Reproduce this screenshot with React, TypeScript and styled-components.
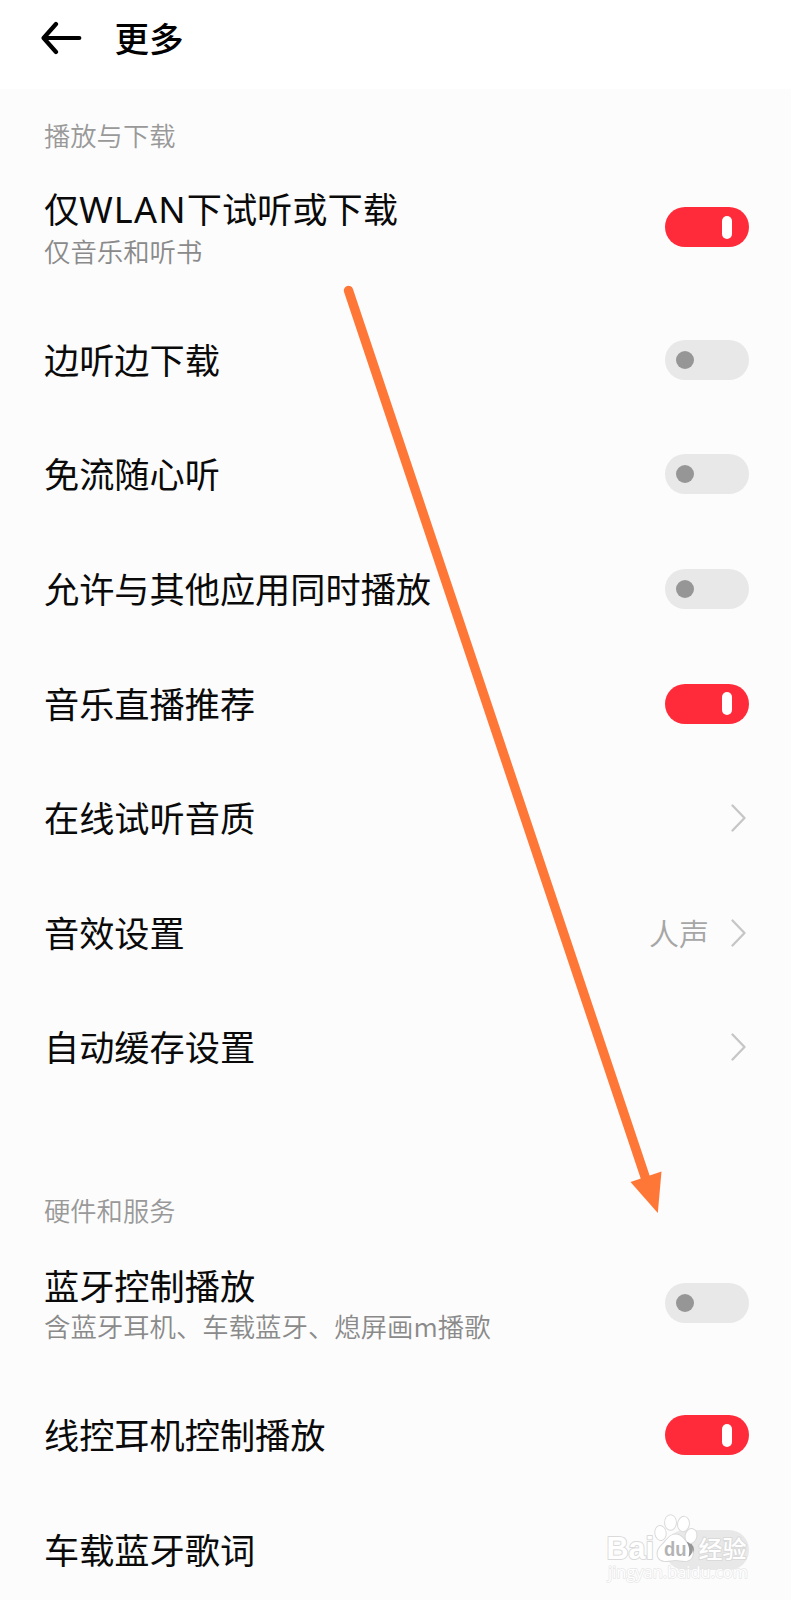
import React from "react";
import styled, { createGlobalStyle } from "styled-components";

const GlobalStyle = createGlobalStyle`
  * { box-sizing: border-box; }
  html, body { margin: 0; padding: 0; background: #fcfcfc; }
  body { overflow: hidden; }
`;

const Page = styled.main`
  position: relative;
  width: 791px;
  height: 1600px;
  overflow: hidden;
  display: flex;
  flex-direction: column;
  background: #fcfcfc;
  color: #0a0a0a;
  font-family: "Noto Sans CJK SC", "Noto Sans", sans-serif;
`;

const Header = styled.header`
  flex: none;
  display: flex;
  align-items: center;
  gap: 32.5px;
  height: 89px;
  padding: 0 0 13px 41px;
  background: #fff;
`;

const Title = styled.h1`
  margin: 0;
  padding-bottom: 2px;
  font-size: 34.6px;
  line-height: 50px;
  font-weight: 500;
  color: #000;
`;

const Section = styled.section`
  flex: none;
  padding: 31px 42px 0 44px;

  & + & {
    padding-top: 90.7px;
  }
`;

const SectionLabel = styled.h2`
  margin: 0;
  height: 32px;
  font-size: 26.3px;
  line-height: 29px;
  font-weight: 350;
  color: #999;
`;

const Row = styled.div<{ $tall?: boolean }>`
  display: flex;
  align-items: center;
  justify-content: space-between;
  height: ${(p) => (p.$tall ? 150.5 : 114.6)}px;
`;

const Labels = styled.div<{ $tall?: boolean }>`
  display: flex;
  flex-direction: column;
  padding: ${(p) => (p.$tall ? "1px 0 0" : "0 0 2px")};
  white-space: nowrap;
`;

const Name = styled.span`
  font-size: 35.2px;
  line-height: 44px;
`;

const Latin = styled.span`
  font-family: "Noto Sans", sans-serif;
  font-size: 36px;
  letter-spacing: 1.2px;
`;

const Note = styled.span`
  padding-top: 1px;
  font-size: 26.4px;
  line-height: 36px;
  font-weight: 350;
  color: #8a8a8a;
`;

const Track = styled.span<{ $on?: boolean }>`
  flex: none;
  display: flex;
  align-items: center;
  justify-content: ${(p) => (p.$on ? "flex-end" : "flex-start")};
  width: 84px;
  height: 40px;
  padding: 0 ${(p) => (p.$on ? 17.5 : 11)}px;
  border-radius: 20px;
  background: ${(p) => (p.$on ? "#ff2b3a" : "#e8e8e8")};
`;

const Knob = styled.span<{ $on?: boolean }>`
  width: ${(p) => (p.$on ? 9.5 : 18)}px;
  height: ${(p) => (p.$on ? 23 : 18)}px;
  border-radius: 9px;
  background: ${(p) => (p.$on ? "#fff" : "#969696")};
`;

const Trailing = styled.span`
  display: flex;
  align-items: center;
  gap: 22px;
  padding-right: 3px;
`;

const Value = styled.span`
  padding-bottom: 2px;
  font-size: 30px;
  line-height: 40px;
  font-weight: 350;
  color: #a6a6a6;
`;

const Overlay = styled.svg`
  position: absolute;
  inset: 0;
  pointer-events: none;
`;

const BackIcon = () => (
  <svg width="41" height="34" viewBox="0 0 41 34" fill="none" stroke="#000" strokeWidth="4.2" strokeLinecap="round" strokeLinejoin="round">
    <path d="M15 3 2.6 17 15 31M3 17H38.3" />
  </svg>
);

const Chevron = () => (
  <svg width="15" height="28" viewBox="0 0 15 28" fill="none" stroke="#c6c6c6" strokeWidth="2.3" strokeLinecap="round" strokeLinejoin="round">
    <path d="M1.5 1.5 13.5 14 1.5 26.5" />
  </svg>
);

const Switch = ({ on }: { on?: boolean }) => (
  <Track $on={on} role="switch" aria-checked={!!on}>
    <Knob $on={on} />
  </Track>
);

type Item = {
  name: React.ReactNode;
  note?: string;
  on?: boolean;
  link?: boolean;
  value?: string;
};

const playback: Item[] = [
  { name: <>仅<Latin>WLAN</Latin>下试听或下载</>, note: "仅音乐和听书", on: true },
  { name: "边听边下载" },
  { name: "免流随心听" },
  { name: "允许与其他应用同时播放" },
  { name: "音乐直播推荐", on: true },
  { name: "在线试听音质", link: true },
  { name: "音效设置", link: true, value: "人声" },
  { name: "自动缓存设置", link: true },
];

const hardware: Item[] = [
  { name: "蓝牙控制播放", note: "含蓝牙耳机、车载蓝牙、熄屏画m播歌" },
  { name: "线控耳机控制播放", on: true },
  { name: "车载蓝牙歌词" },
];

const Group = ({ label, items }: { label: string; items: Item[] }) => (
  <Section>
    <SectionLabel>{label}</SectionLabel>
    {items.map((item, i) => (
      <Row key={i} $tall={!!item.note}>
        <Labels $tall={!!item.note}>
          <Name>{item.name}</Name>
          {item.note && <Note>{item.note}</Note>}
        </Labels>
        {item.link ? (
          <Trailing>
            {item.value && <Value>{item.value}</Value>}
            <Chevron />
          </Trailing>
        ) : (
          <Switch on={item.on} />
        )}
      </Row>
    ))}
  </Section>
);

const Annotation = () => (
  <Overlay width="791" height="1600" viewBox="0 0 791 1600" aria-hidden="true">
    <path d="M348.5 290.5 645.5 1178" stroke="#ff7737" strokeWidth="9.4" strokeLinecap="round" />
    <path d="M657.8 1213 630.5 1182 661.5 1171.5Z" fill="#ff7737" />
  </Overlay>
);

const Watermark = () => (
  <Overlay width="791" height="1600" viewBox="0 0 791 1600">
    <g fill="#fff" stroke="#dadada" strokeWidth="2" paintOrder="stroke" strokeLinejoin="round">
      <text x="606.5" y="1559" fontFamily="Liberation Sans, sans-serif" fontWeight="700" fontSize="32" textLength="47.5" lengthAdjust="spacingAndGlyphs">Bai</text>
      <ellipse cx="660.5" cy="1533" rx="5.2" ry="7" transform="rotate(-8 660.5 1533)" />
      <ellipse cx="670.5" cy="1522.5" rx="5.4" ry="7.3" />
      <ellipse cx="683.5" cy="1524" rx="5.4" ry="7.2" transform="rotate(8 683.5 1524)" />
      <ellipse cx="691" cy="1536" rx="5.4" ry="7" transform="rotate(14 691 1536)" />
      <path d="M675.5 1534.500c6.500 0 9 6 13 10.500c7 7 5 16-3.500 16c-4 0-6-1-9.500-1s-5.500 1-9.500 1c-9.500 0-11-9.500-4-16c4.500-4 7-10.500 13.500-10.500Z" />
      <text x="698.5" y="1557.5" fontFamily="Noto Sans CJK SC, sans-serif" fontWeight="500" fontSize="24">经验</text>
      <text x="608" y="1578" fontFamily="Open Sans, sans-serif" fontSize="16.5" strokeWidth="1.3" stroke="#e6e6e6" textLength="140" lengthAdjust="spacingAndGlyphs">jingyan.baidu.com</text>
    </g>
    <path d="M686.500 1541.500c7 3 9 10 2 15.500c1.500-6 1-10-2-15.500Z" fill="#969696" />
    <text x="664" y="1556" fontFamily="Liberation Sans, sans-serif" fontWeight="700" fontSize="19.5" fill="#b4b4b4" textLength="22.5" lengthAdjust="spacingAndGlyphs">du</text>
  </Overlay>
);

export default function App() {
  return (
    <>
      <GlobalStyle />
      <Page>
        <Header>
          <BackIcon />
          <Title>更多</Title>
        </Header>
        <Group label="播放与下载" items={playback} />
        <Group label="硬件和服务" items={hardware} />
        <Annotation />
        <Watermark />
      </Page>
    </>
  );
}
